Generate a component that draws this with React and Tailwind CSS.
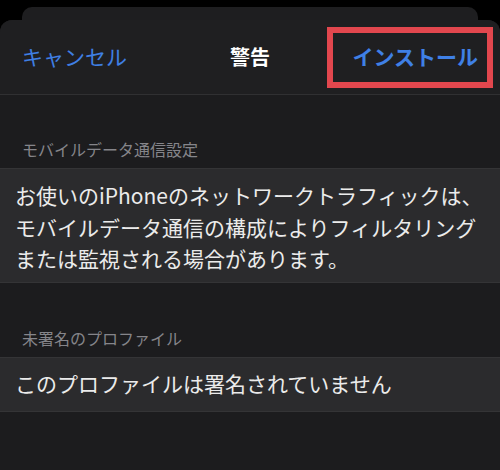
const jp = { fontFamily: '"Noto Sans CJK JP", "Noto Sans", sans-serif' };

const Section = ({ title, children, top }) => (
  <div>
    <div className={`${top} pb-[9px] px-[22px] text-[16px] leading-[20px] text-[#85858a]`}>
      {title}
    </div>
    <div className="bg-[#2b2b2d] border-y border-[#343436] px-[15px] text-[21px] text-[#ebebeb] whitespace-nowrap">
      {children}
    </div>
  </div>
);

export default function App() {
  return (
    <div
      className="relative w-[500px] h-[470px] bg-black overflow-hidden flex flex-col pt-[7px]"
      style={jp}
    >
      {/* sheet stacked behind */}
      <div className="mx-[22px] h-[13px] rounded-t-[10px] bg-[#1e1e20]" />

      <div className="flex-1 rounded-t-[12px] bg-[#1c1c1e]">
        <div className="h-[75px] grid grid-cols-[1fr_auto_1fr] items-center px-[22px] border-b border-[#303032] bg-[#1f1f21] rounded-t-[12px]">
          <span className="justify-self-start text-[21px] text-[#3f7fe4]">キャンセル</span>
          <span className="text-[20px] font-bold text-white">警告</span>
          <span className="justify-self-end text-[21px] font-bold text-[#3f80e6]">インストール</span>
        </div>

        <Section title="モバイルデータ通信設定" top="pt-[44px]">
          <div className="pt-[11px] pb-[7px] leading-[31.5px]">
            お使いのiPhoneのネットワークトラフィックは、
            <br />
            モバイルデータ通信の構成によりフィルタリング
            <br />
            または監視される場合があります。
          </div>
        </Section>

        <Section title="未署名のプロファイル" top="pt-[45px]">
          <div className="h-[53px] flex items-center">
            このプロファイルは署名されていません
          </div>
        </Section>
      </div>

      {/* highlight drawn over the install button */}
      <div className="absolute left-[327px] top-[27px] w-[166px] h-[61px] border-[6px] border-[#e2474e]" />
    </div>
  );
}
